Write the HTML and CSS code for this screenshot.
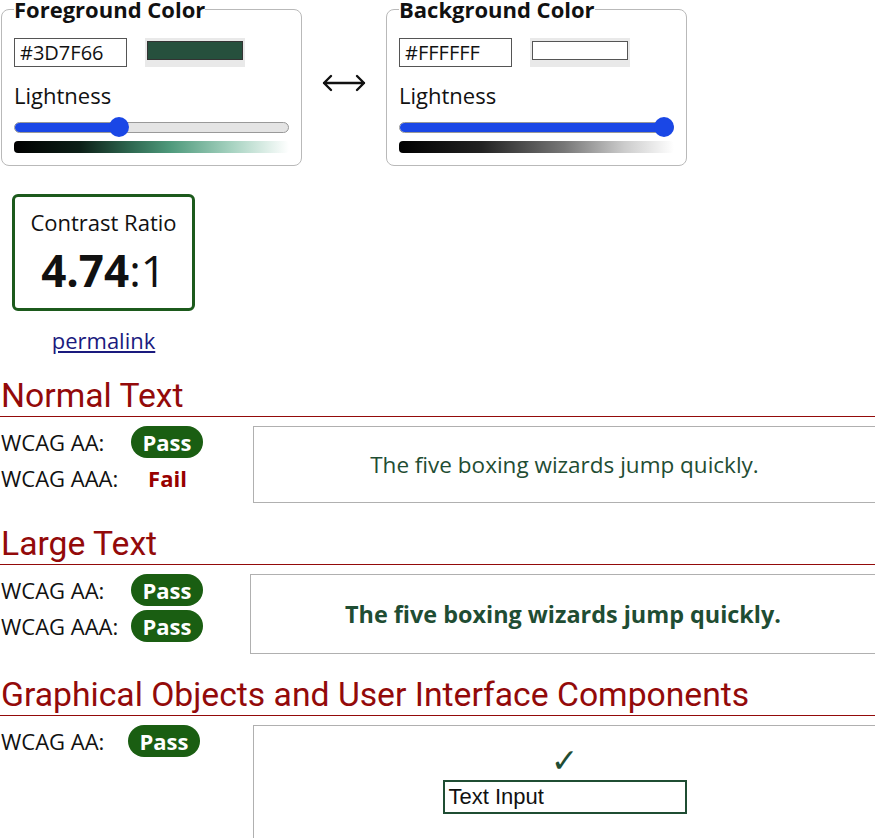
FILE: index.html
```html
<!DOCTYPE html>
<html>
<head>
<meta charset="utf-8">
<link rel="stylesheet" href="styles.css">
</head>
<body>
<div class="top">
  <fieldset class="picker">
    <legend>Foreground Color</legend>
    <div class="inrow">
      <div class="hex">#3D7F66</div>
      <div class="swatch"><div class="swatch-in fg"></div></div>
    </div>
    <div class="label">Lightness</div>
    <div class="slider">
      <div class="track"><div class="fill" style="width:38%"></div></div>
      <div class="thumb" style="left:calc(38% - 10px)"></div>
    </div>
    <div class="grad fg-grad"></div>
  </fieldset>
  <div class="swap">
    <svg width="44" height="18" viewBox="0 0 44 18" aria-hidden="true">
      <path d="M2 9 H42 M9 2 L2 9 L9 16 M35 2 L42 9 L35 16" fill="none" stroke="#111" stroke-width="2.4" stroke-linecap="round" stroke-linejoin="round"/>
    </svg>
  </div>
  <fieldset class="picker">
    <legend>Background Color</legend>
    <div class="inrow">
      <div class="hex">#FFFFFF</div>
      <div class="swatch"><div class="swatch-in bg"></div></div>
    </div>
    <div class="label">Lightness</div>
    <div class="slider">
      <div class="track"><div class="fill" style="width:100%"></div></div>
      <div class="thumb" style="left:calc(100% - 20px)"></div>
    </div>
    <div class="grad bg-grad"></div>
  </fieldset>
</div>

<div class="ratio-wrap">
  <div class="ratio">
    <div class="ratio-title">Contrast Ratio</div>
    <div class="ratio-val"><b>4.74</b>:1</div>
  </div>
  <div class="plink"><a class="permalink" href="#">permalink</a></div>
</div>

<section class="sec">
  <h2>Normal Text</h2>
  <div class="result">
    <div class="checks">
      <div class="check"><span class="lbl">WCAG AA:</span><span class="pass">Pass</span></div>
      <div class="check"><span class="lbl">WCAG AAA:</span><span class="fail">Fail</span></div>
    </div>
    <div class="sample normal">The five boxing wizards jump quickly.</div>
  </div>
</section>

<section class="sec">
  <h2>Large Text</h2>
  <div class="result">
    <div class="checks">
      <div class="check"><span class="lbl">WCAG AA:</span><span class="pass">Pass</span></div>
      <div class="check"><span class="lbl">WCAG AAA:</span><span class="pass">Pass</span></div>
    </div>
    <div class="sample large">The five boxing wizards jump quickly.</div>
  </div>
</section>

<section class="sec">
  <h2>Graphical Objects and User Interface Components</h2>
  <div class="result">
    <div class="checks">
      <div class="check"><span class="lbl narrow">WCAG AA:</span><span class="pass">Pass</span></div>
    </div>
    <div class="sample ui">
      <div class="tick">&#10003;</div>
      <div class="tinput">Text Input</div>
    </div>
  </div>
</section>
</body>
</html>
```

FILE: styles.css
```css
html, body {
  margin: 0;
  padding: 0;
  background: #fff;
}
body {
  font-family: "Open Sans", "DejaVu Sans", sans-serif;
  color: #111;
  width: 875px;
  height: 838px;
  overflow: hidden;
}
.top {
  display: flex;
  align-items: flex-start;
  padding-left: 1px;
}
.picker {
  margin: 0;
  width: 275px;
  padding: 0 12px 12px;
  border: 1px solid #b9b9b9;
  border-radius: 8px;
  box-sizing: content-box;
}
.picker legend {
  padding: 0;
  font-weight: 700;
  font-size: 22px;
  line-height: 18px;
  color: #111;
}
.inrow {
  display: flex;
  align-items: center;
  gap: 18px;
  margin-top: 20px;
}
.hex {
  width: 106px;
  height: 27px;
  border: 1px solid #555;
  font-size: 20px;
  line-height: 27px;
  padding-left: 5px;
  box-sizing: content-box;
  white-space: nowrap;
}
.swatch {
  width: 96px;
  height: 23px;
  padding: 3px 2px;
  background: #e9e9e9;
}
.swatch-in {
  height: 17px;
  border: 1px solid #333;
}
.swatch-in.fg { background: #26503d; }
.swatch-in.bg { background: #fff; border-color: #555; }
.label {
  font-size: 22px;
  line-height: 30px;
  margin-top: 13px;
}
.slider {
  position: relative;
  height: 20px;
  margin-top: 7px;
}
.track {
  position: absolute;
  left: 0;
  right: 0;
  top: 5px;
  height: 9px;
  border: 1px solid #999;
  border-radius: 6px;
  background: #e4e4e4;
  overflow: hidden;
}
.fill {
  height: 100%;
  background: #1a47e6;
}
.thumb {
  position: absolute;
  top: 0;
  width: 20px;
  height: 20px;
  border-radius: 50%;
  background: #1a47e6;
}
.grad {
  height: 12px;
  border-radius: 4px;
  margin-top: 4px;
}
.fg-grad {
  background: linear-gradient(to right, #000 0%, #0c1f17 24%, #2f6a52 43%, #4f9a7c 57%, #a6d2c0 79%, #fff 100%);
}
.bg-grad {
  background: linear-gradient(to right, #000 0%, #222 30%, #777 60%, #ccc 82%, #fff 100%);
}
.swap {
  width: 84px;
  display: flex;
  justify-content: center;
  margin-top: 74px;
}
.swap svg { display: block; }
.ratio-wrap {
  width: 183px;
  margin-left: 12px;
  margin-top: 28px;
  text-align: center;
}
.ratio {
  height: 111px;
  border: 3px solid #1c5a1c;
  border-radius: 6px;
}
.ratio-title {
  font-size: 22px;
  line-height: 30px;
  margin-top: 10px;
}
.ratio-val {
  font-size: 44px;
  line-height: 50px;
  margin-top: 8px;
}
.ratio-val b { font-weight: 700; }
.plink {
  margin-top: 14px;
  line-height: 30px;
  font-size: 22px;
}
.permalink {
  color: #1a1a7e;
}
.sec h2 {
  margin: 21px 0 0;
  font-family: Roboto, "Liberation Sans", sans-serif;
  font-weight: 400;
  font-size: 33.7px;
  line-height: 40px;
  color: #930a0a;
  border-bottom: 1px solid #930a0a;
  padding-left: 1px;
  white-space: nowrap;
}
.sec:first-of-type h2 { margin-top: 21px; }
.result {
  display: flex;
  align-items: flex-start;
  padding-top: 9px;
}
.checks {
  width: 253px;
  flex: none;
  margin-top: -2px;
}
.check {
  display: flex;
  align-items: center;
  height: 36px;
  font-size: 22px;
}
.lbl {
  width: 130px;
  flex: none;
  padding-left: 1px;
  white-space: nowrap;
}
.lbl.narrow { width: 127px; }
.pass {
  display: inline-block;
  background: #1a5e12;
  color: #fff;
  font-weight: 700;
  font-size: 22px;
  line-height: 32px;
  height: 32px;
  padding: 0 11.5px;
  border-radius: 16px;
}
.fail {
  display: inline-block;
  width: 73px;
  text-align: center;
  color: #980000;
  font-weight: 700;
}
.sample {
  flex: none;
  width: 623px;
  border: 1px solid #b0b0b0;
  color: #1f4d33;
  text-align: center;
  box-sizing: border-box;
  white-space: nowrap;
}
.sample.normal {
  height: 77px;
  font-size: 22.5px;
  line-height: 75px;
}
.sample.large {
  width: 626px;
  height: 80px;
  font-size: 23.4px;
  font-weight: 700;
  line-height: 78px;
  margin-left: -3px;
}
.sample.ui {
  height: 114px;
  display: flex;
  flex-direction: column;
  align-items: center;
}
.tick {
  margin-top: 20px;
  font-family: "DejaVu Sans", sans-serif;
  font-size: 33px;
  line-height: 30px;
  color: #1f4d33;
}
.tinput {
  width: 236px;
  height: 30px;
  border: 2px solid #1f4d33;
  text-align: left;
  padding-left: 4px;
  font-family: "Liberation Sans", Arial, sans-serif;
  font-size: 22px;
  line-height: 30px;
  color: #111;
  box-sizing: content-box;
  margin-top: 4px;
}
```
